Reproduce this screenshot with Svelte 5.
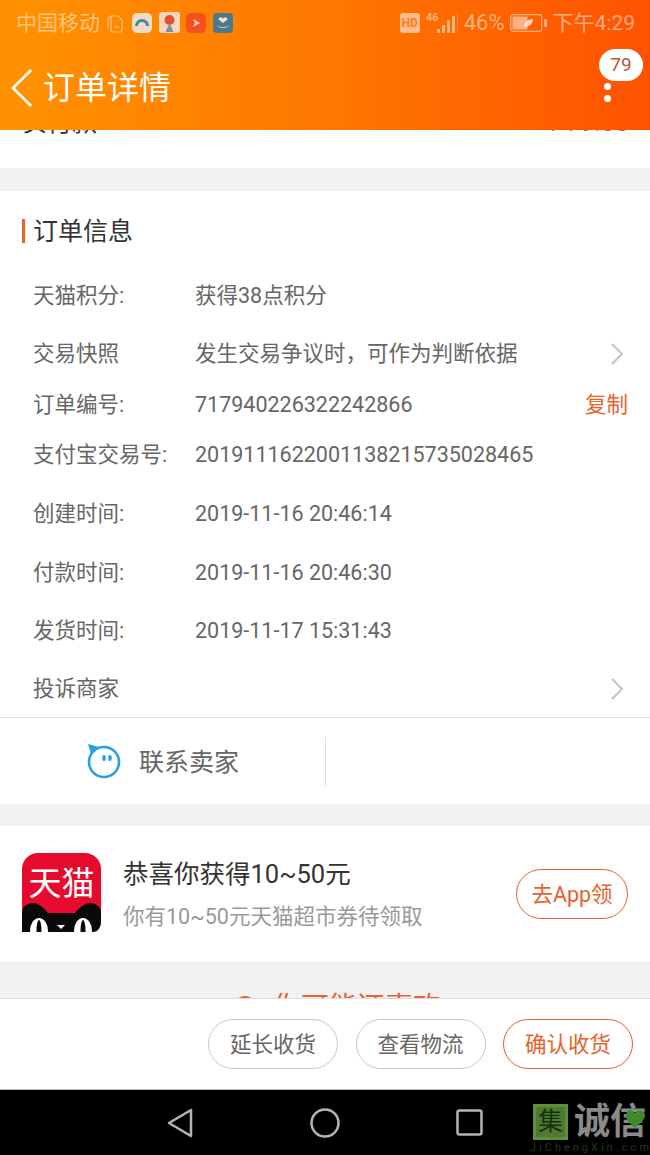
<script>
  const rows = [
    { label: "天猫积分:", value: "获得38点积分" },
    { label: "交易快照", value: "发生交易争议时，可作为判断依据", arrow: true },
    { label: "订单编号:", value: "717940226322242866", copy: true },
    { label: "支付宝交易号:", value: "2019111622001138215735028465" },
    { label: "创建时间:", value: "2019-11-16 20:46:14" },
    { label: "付款时间:", value: "2019-11-16 20:46:30" },
    { label: "发货时间:", value: "2019-11-17 15:31:43" },
    { label: "投诉商家", value: "", arrow: true }
  ];
</script>

<div class="page">
  <header class="top">
    <div class="status">
      <span>中国移动</span>
      <svg class="doc" width="16" height="20" viewBox="0 0 16 20" fill="none" stroke="currentColor" stroke-width="1.2">
        <path d="M4 3h7l4 4v10a2 2 0 0 1-2 2H6a2 2 0 0 1-2-2z" />
        <path d="M4 4H3a2 2 0 0 0-2 2v9" />
        <path d="M7 14h5" />
      </svg>
      <div class="apps">
        <svg width="20" height="20" viewBox="0 0 20 20">
          <rect width="20" height="20" rx="5" fill="#f3dcc6" />
          <path d="M3 13a7 7 0 0 1 14 0h-3a4 4 0 0 0-8 0z" fill="#3d87a8" />
        </svg>
        <svg width="21" height="21" viewBox="0 0 21 21">
          <rect width="21" height="21" rx="3" fill="#f8d6bd" />
          <circle cx="10.5" cy="8" r="5" fill="#e2502f" />
          <path d="M10.5 11l-4 9h8z" fill="#7a8fa8" />
        </svg>
        <svg width="20" height="20" viewBox="0 0 20 20">
          <rect width="20" height="20" rx="5" fill="#f4511e" />
          <path d="M7 6l7 4-7 4 2-4z" fill="#fbd9c4" />
        </svg>
        <svg width="20" height="20" viewBox="0 0 20 20">
          <rect width="20" height="20" rx="4" fill="#4a7a8c" />
          <path d="M10 10L5.5 6.5a2.3 2.3 0 0 1 4.5-.5 2.3 2.3 0 0 1 4.5.5z" fill="#f6e3cf" />
          <path d="M4 12c3 3 9 3 12 0-1 4-11 4-12 0z" fill="#f6e3cf" />
        </svg>
      </div>
      <div class="status-right">
        <span class="hd">HD</span>
        <svg width="32" height="24" viewBox="0 0 32 24" fill="currentColor">
          <text x="0" y="10" class="net">46</text>
          <rect x="11" y="18" width="3" height="4" />
          <rect x="16" y="14" width="3" height="8" />
          <rect x="21" y="9" width="3" height="13" />
          <rect x="26" y="5" width="3" height="17" />
          <rect x="31" y="2" width="1" height="20" opacity="0.5" />
        </svg>
        <span class="pct">46%</span>
        <svg class="battery" width="37" height="18" viewBox="0 0 37 18">
          <rect x="0.7" y="0.7" width="31" height="16.6" rx="2.5" fill="none" stroke="currentColor" stroke-width="1.3" />
          <rect x="2.5" y="2.5" width="15" height="13" fill="currentColor" />
          <path d="M14 13c0-5 4-8 9-8 0 5-4 8-9 8z" fill="#fff" opacity="0.7" />
          <rect x="34" y="5" width="3" height="8" rx="1" fill="currentColor" />
        </svg>
        <span>下午4:29</span>
      </div>
    </div>
    <div class="nav">
      <svg class="back" width="24" height="40" viewBox="0 0 24 40" fill="none" stroke="#fff" stroke-width="2.6">
        <path d="M21 2L3 20l18 18" />
      </svg>
      <h1>订单详情</h1>
    </div>
    <span class="badge">79</span>
    <span class="dot dot-a"></span>
    <span class="dot dot-b"></span>
  </header>

  <main class="scroll">
    <div class="pay">
      <span>实付款</span>
      <span class="pay-sum">¥ 79.38</span>
    </div>

    <section class="card">
      <h2><span>订单信息</span></h2>
      <div class="info">
        {#each rows as row}
          <div class="row">
            <span class="label">{row.label}</span>
            <span class="value">{row.value}</span>
            {#if row.arrow}
              <svg class="arrow" width="14" height="22" viewBox="0 0 14 22" fill="none" stroke="#c4c4c4" stroke-width="2">
                <path d="M2 1l10 10L2 21" />
              </svg>
            {/if}
            {#if row.copy}
              <span class="copy">复制</span>
            {/if}
          </div>
        {/each}
      </div>
      <div class="actions">
        <div class="contact">
          <svg width="36" height="36" viewBox="0 0 36 36" fill="none">
            <circle cx="18" cy="19" r="15" stroke="#29a1e0" stroke-width="2.6" />
            <path d="M2 1l11 3-8 7z" fill="#29a1e0" />
            <ellipse cx="18" cy="15" rx="1.8" ry="3" fill="#29a1e0" />
            <ellipse cx="24" cy="15" rx="1.8" ry="3" fill="#29a1e0" />
          </svg>
          <span>联系卖家</span>
        </div>
      </div>
    </section>

    <section class="promo">
      <svg class="tmall" width="79" height="79" viewBox="0 0 79 79">
        <rect width="79" height="79" rx="16" fill="#e60a2e" />
        <path d="M0 79V60c0-7 6-10 12-10 6 1 11 6 14 10h27c3-4 8-9 14-10 6 0 12 3 12 10v9c0 5-3 10-8 10z" fill="#0a0a0a" />
        <ellipse cx="17" cy="78" rx="9" ry="13" fill="#fff" />
        <ellipse cx="61" cy="78" rx="9" ry="13" fill="#fff" />
        <ellipse cx="17" cy="78" rx="2.5" ry="11" fill="#0a0a0a" />
        <ellipse cx="61" cy="78" rx="2.5" ry="11" fill="#0a0a0a" />
        <path d="M35 72h8l-4 4z" fill="#fff" />
        <text x="39.5" y="42" class="tmall-text">天猫</text>
      </svg>
      <div class="promo-text">
        <div class="promo-title">恭喜你获得10~50元</div>
        <div class="promo-sub">你有10~50元天猫超市券待领取</div>
      </div>
      <button class="pill orange small">去App领</button>
    </section>

    <div class="guess">
      <span class="guess-dot"></span>
      <span>你可能还喜欢</span>
    </div>
  </main>

  <footer class="bottom">
    <button class="pill">延长收货</button>
    <button class="pill">查看物流</button>
    <button class="pill orange">确认收货</button>
  </footer>

  <div class="softkeys">
    <svg width="26" height="30" viewBox="0 0 26 30" fill="none" stroke="#b4b4b4" stroke-width="2.5">
      <path d="M24 2v26L2 15z" stroke-linejoin="round" />
    </svg>
    <svg width="30" height="30" viewBox="0 0 30 30" fill="none" stroke="#b4b4b4" stroke-width="2.5">
      <circle cx="15" cy="15" r="13.5" />
    </svg>
    <svg width="27" height="27" viewBox="0 0 27 27" fill="none" stroke="#b4b4b4" stroke-width="2.5">
      <rect x="1.5" y="1.5" width="24" height="24" rx="2" />
    </svg>
    <div class="mark">
      <div class="mark-top">
        <span class="mark-box">集</span>
        <span class="mark-name">诚信</span>
      </div>
      <div class="mark-url">JiChengXin.com</div>
      <svg class="leaf" width="22" height="24" viewBox="0 0 22 24">
        <path d="M11 22C3 15 0 11 3 6c2-3 6-2 8 1 2-3 6-4 9-1 3 5-1 9-9 16z" fill="#3e8a2d" />
      </svg>
    </div>
  </div>
</div>

<style>
  :global(body) {
    margin: 0;
    background: #f2f2f2;
  }
  .page {
    width: 650px;
    height: 1155px;
    display: flex;
    flex-direction: column;
    overflow: hidden;
    font-family: Roboto, "Noto Sans CJK SC", sans-serif;
    font-size: 21.5px;
    line-height: 30px;
    color: #666;
  }

  /* header */
  .top {
    position: relative;
    height: 130px;
    flex: none;
    background: linear-gradient(90deg, #ff9200 0%, #ff7800 50%, #ff5200 100%);
    color: #fff;
  }
  .status {
    height: 45px;
    padding: 0 15px 0 16px;
    display: flex;
    align-items: center;
    font-size: 21px;
    color: rgba(255, 255, 255, 0.5);
  }
  .doc {
    margin-left: 7px;
  }
  .apps {
    display: flex;
    align-items: center;
    gap: 6.5px;
    margin-left: 9px;
  }
  .status-right {
    margin-left: auto;
    display: flex;
    align-items: center;
    gap: 6px;
  }
  .hd {
    width: 20px;
    height: 20px;
    border-radius: 3px;
    background: rgba(255, 255, 255, 0.55);
    color: #ff7a1a;
    font-size: 12px;
    font-weight: 700;
    line-height: 20px;
    text-align: center;
  }
  .net {
    font-size: 11px;
    font-weight: 700;
  }
  .pct {
    font-size: 22px;
  }
  .battery {
    margin-left: -1px;
  }
  .nav {
    height: 84px;
    padding-left: 10px;
    display: flex;
    align-items: center;
    gap: 9px;
    margin-top: 1px;
  }
  h1 {
    margin: 0;
    font-size: 32px;
    font-weight: 400;
    line-height: 40px;
  }
  .badge {
    position: absolute;
    left: 599px;
    top: 49px;
    width: 44px;
    height: 32px;
    border-radius: 16px;
    background: #fff;
    color: #b9573a;
    font-size: 19px;
    line-height: 32px;
    text-align: center;
  }
  .dot {
    position: absolute;
    left: 604px;
    width: 7px;
    height: 7px;
    border-radius: 50%;
    background: #fff;
  }
  .dot-a {
    top: 83px;
  }
  .dot-b {
    top: 95px;
  }

  /* scroll area */
  .scroll {
    height: 868px;
    flex: none;
    overflow: hidden;
    background: #f2f2f2;
  }
  .pay {
    height: 38px;
    padding: 0 21px 0 22px;
    background: #fff;
    display: flex;
    justify-content: space-between;
    font-size: 25px;
    color: #333;
  }
  .pay span {
    margin-top: -22px;
  }
  .pay-sum {
    color: #e8622a;
  }
  .card {
    margin-top: 23px;
    background: #fff;
  }
  h2 {
    margin: 0;
    height: 76px;
    box-sizing: border-box;
    padding: 3px 0 0 22px;
    display: flex;
    align-items: center;
    font-size: 25px;
    font-weight: 400;
    color: #333;
  }
  h2 span {
    border-left: 3px solid #e8622a;
    padding-left: 8px;
    height: 24px;
    line-height: 26px;
  }
  .info {
    display: grid;
    grid-template-rows: 58px 58px 44px 56px 61px 58px 58px 57px;
    padding: 0 22px 0 33px;
  }
  .row {
    display: flex;
    align-items: center;
  }
  .label {
    width: 162px;
    flex: none;
  }
  .value {
    flex: 1;
  }
  .arrow {
    margin-right: 4px;
  }
  .copy {
    color: #e8622a;
  }
  .actions {
    height: 86px;
    border-top: 1px solid #ddd;
    display: flex;
    align-items: center;
  }
  .contact {
    width: 326px;
    height: 49px;
    box-sizing: border-box;
    border-right: 1px solid #ddd;
    padding-left: 86px;
    display: flex;
    align-items: center;
    gap: 17px;
    font-size: 25px;
  }
  .contact span {
    margin-top: 4px;
  }

  /* promo */
  .promo {
    margin-top: 22px;
    height: 136px;
    padding: 0 22px;
    box-sizing: border-box;
    background: #fff;
    display: flex;
    align-items: center;
  }
  .tmall {
    flex: none;
    margin-top: -4px;
  }
  .tmall-text {
    fill: #fff;
    font-size: 33px;
    text-anchor: middle;
  }
  .promo-text {
    flex: 1;
    margin-left: 22px;
  }
  .promo-title {
    font-size: 25.5px;
    line-height: 34px;
    color: #333;
  }
  .promo-sub {
    margin-top: 11px;
    color: #999;
  }
  .guess {
    height: 60px;
    padding: 29px 0 0 25px;
    box-sizing: border-box;
    display: flex;
    align-items: flex-start;
    justify-content: center;
    gap: 17px;
    font-size: 28px;
    line-height: 34px;
    color: #e8622a;
  }
  .guess-dot {
    width: 22px;
    height: 22px;
    margin-top: 5px;
    border-radius: 50%;
    background: #e8622a;
  }

  /* footer */
  .bottom {
    height: 92px;
    flex: none;
    box-sizing: border-box;
    padding: 0 17px 1px 0;
    background: #fff;
    border-top: 1px solid #ddd;
    border-bottom: 1px solid #bbb;
    display: flex;
    align-items: center;
    justify-content: flex-end;
    gap: 17.5px;
  }
  .pill {
    width: 130px;
    height: 50px;
    padding: 2px 0 0;
    border: 1px solid #c8c8c8;
    border-radius: 25px;
    background: #fff;
    color: #666;
    font: inherit;
  }
  .pill.orange {
    border-color: #e8622a;
    color: #e8622a;
  }
  .pill.small {
    width: 112px;
    flex: none;
  }

  /* android keys */
  .softkeys {
    position: relative;
    height: 65px;
    flex: none;
    background: #000;
    display: flex;
    align-items: center;
    padding-left: 167px;
    box-sizing: border-box;
    gap: 117px;
  }
  .softkeys svg:nth-child(3) {
    margin-left: -1px;
  }
  .mark {
    position: absolute;
    left: 530px;
    top: 14px;
    width: 120px;
  }
  .mark-top {
    display: flex;
    align-items: center;
    gap: 6px;
    margin-left: 3px;
  }
  .mark-box {
    width: 35px;
    height: 36px;
    box-sizing: border-box;
    background: #4f7a34;
    border: 3px solid #5f8f3d;
    color: #16300b;
    font-size: 25px;
    line-height: 29px;
    text-align: center;
  }
  .mark-name {
    color: #8a8a8a;
    font-size: 36px;
    font-weight: 700;
    line-height: 36px;
    white-space: nowrap;
  }
  .mark-url {
    margin-top: 1px;
    color: #1c3d14;
    font-size: 11px;
    letter-spacing: 3px;
    line-height: 13px;
    white-space: nowrap;
  }
  .leaf {
    position: absolute;
    left: 95px;
    top: 2px;
  }
</style>
